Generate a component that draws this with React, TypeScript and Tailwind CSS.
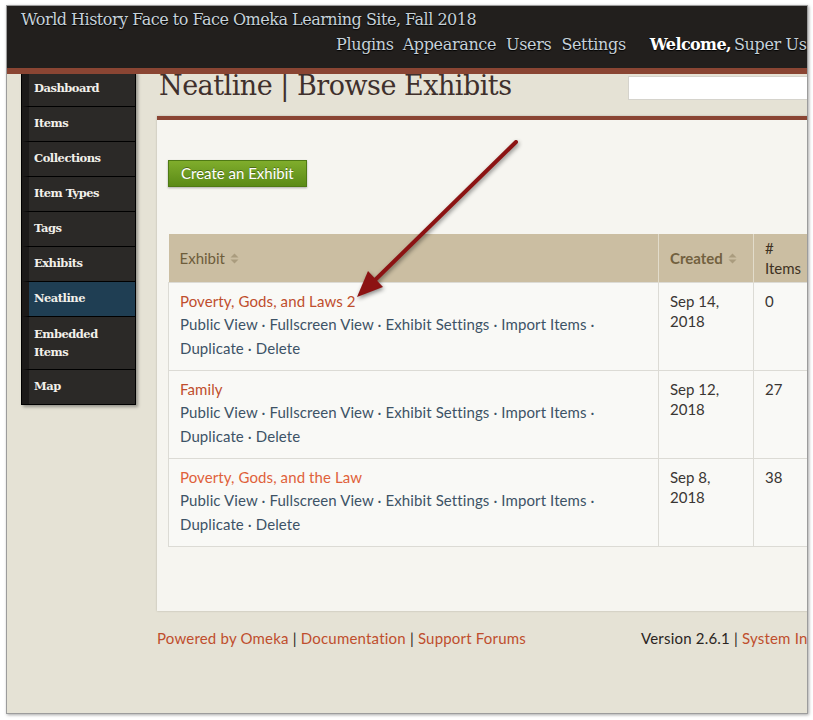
import React from "react";

const serif = { fontFamily: '"DejaVu Serif", "Liberation Serif", serif' };
const sans = { fontFamily: 'Lato, "Open Sans", sans-serif' };

function SortIcon() {
  return (
    <svg width="9" height="11" viewBox="0 0 9 11" className="inline-block ml-[5px] -mt-[2px]">
      <path d="M4.5 0.5 L8.5 4.5 L0.5 4.5 Z" fill="#aa9c7e" />
      <path d="M4.5 10.5 L8.5 6.5 L0.5 6.5 Z" fill="#aa9c7e" />
    </svg>
  );
}

const navItems = ["Dashboard", "Items", "Collections", "Item Types", "Tags", "Exhibits", "Neatline"];

const rows = [
  { title: "Poverty, Gods, and Laws 2", color: "text-[#bf4e2d]", date: ["Sep 14,", "2018"], items: "0" },
  { title: "Family", color: "text-[#bf4e2d]", date: ["Sep 12,", "2018"], items: "27" },
  { title: "Poverty, Gods, and the Law", color: "text-[#e0613a]", date: ["Sep 8,", "2018"], items: "38" },
];

function Dot() {
  return <span className="text-[#3d5366]"> · </span>;
}

export default function App() {
  return (
    <div className="relative w-[813px] h-[720px] bg-white overflow-hidden">
      <div className="pl-[6px] pt-[5px]">
        <div className="w-[802px] h-[709px] border border-[#9c9c9c] shadow-[1px_1px_3px_rgba(0,0,0,0.35)] overflow-hidden bg-[#e5e2d5]">
          <div className="w-[900px]">
            {/* Header */}
            <div className="relative z-10">
              <div className="h-[62px] bg-[#221f1d] pl-[14px] pt-[4px]" style={serif}>
                <div className="text-[16px] leading-[20px] text-[#c6d1d9] tracking-[-0.5px] [text-shadow:0_1px_1px_#000]">
                  World History Face to Face Omeka Learning Site, Fall 2018
                </div>
                <div className="flex items-center mt-[5px] pl-[315px] text-[16px] leading-[20px] text-[#c6d1d9] tracking-[-0.35px] [text-shadow:0_1px_1px_#000]">
                  <span>Plugins</span>
                  <span className="ml-[9px]">Appearance</span>
                  <span className="ml-[10px]">Users</span>
                  <span className="ml-[10px]">Settings</span>
                  <span className="ml-[24px] font-bold text-white tracking-[-0.6px]">Welcome,</span>
                  <span className="ml-[3px]">Super User</span>
                </div>
              </div>
              <div className="h-[6px] bg-[#8a4533]" />
            </div>

            {/* Body */}
            <div className="flex pl-[14px]">
              {/* Sidebar */}
              <div className="w-[115px] shrink-0 -mt-[3px] self-start border border-black bg-[#2b2927] shadow-[2px_2px_3px_rgba(0,0,0,0.35)]" style={serif}>
                {navItems.map((n) => (
                  <div
                    key={n}
                    className={`h-[35px] flex items-center border-b border-black border-l-[7px] border-l-[#1c1a19] pl-[5px] text-[11.5px] font-bold text-[#f2f0ea] tracking-[-0.5px] ${n === "Neatline" ? "bg-[#1f3e53]" : ""}`}
                  >
                    {n}
                  </div>
                ))}
                <div className="h-[53px] flex flex-col justify-center border-b border-black border-l-[7px] border-l-[#1c1a19] pl-[5px] text-[11.5px] leading-[18px] font-bold text-[#f2f0ea] tracking-[-0.5px]">
                  <span>Embedded</span>
                  <span>Items</span>
                </div>
                <div className="h-[34px] flex items-center border-l-[7px] border-l-[#1c1a19] pl-[5px] text-[11.5px] font-bold text-[#f2f0ea] tracking-[-0.5px]">
                  Map
                </div>
              </div>

              {/* Main */}
              <div className="ml-[21px] w-[700px] shrink-0">
                <div className="h-[42px] flex items-start">
                  <div className="w-[471px] shrink-0 pl-[2px] text-[27px] leading-[24px] text-[#3f302c] tracking-[-0.5px]" style={serif}>
                    Neatline | Browse Exhibits
                  </div>
                  <div className="mt-[2px] w-[220px] shrink-0 h-[24px] bg-white border border-[#d5d3cc]" />
                </div>

                <div className="border-t-[4px] border-[#8a4533] bg-[#f6f5f0] shadow-[0_0_2px_rgba(0,0,0,0.2)] pl-[11px] pt-[40px] pb-[64px]" style={sans}>
                  <div className="inline-flex items-center h-[27px] px-[12px] bg-gradient-to-b from-[#80ad2c] to-[#5b8b16] border border-[#4f7a14] text-white text-[15px] shadow-[0_1px_2px_rgba(0,0,0,0.3)] [text-shadow:0_-1px_0_rgba(0,0,0,0.35)]">
                    Create an Exhibit
                  </div>

                  <table className="mt-[47px] w-[650px] border-collapse text-[15px]">
                    <thead>
                      <tr className="bg-[#cbbea2] h-[48px]">
                        <th className="w-[490px] text-left font-normal pl-[11px] text-[#6e5d3b] border-r border-[#e2dccb]">
                          Exhibit
                          <SortIcon />
                        </th>
                        <th className="w-[95px] text-left font-bold pl-[11px] text-[#72613f] border-r border-[#e2dccb]">
                          Created
                          <SortIcon />
                        </th>
                        <th className="text-left font-normal pl-[11px] text-[#3e3222] leading-[20px] align-middle">
                          #<br />Items
                        </th>
                      </tr>
                    </thead>
                    <tbody>
                      {rows.map((r) => (
                        <tr key={r.title} className="bg-[#f9f9f6] border border-[#dcdbd5]">
                          <td className="align-top pl-[11px] pt-[7px] pb-[10px] border-r border-[#dcdbd5]">
                            <div className={`leading-[22px] tracking-[0.1px] ${r.color}`}>{r.title}</div>
                            <div className="leading-[24px] text-[#3d5366] tracking-[0.1px]">
                              Public View<Dot />Fullscreen View<Dot />Exhibit Settings<Dot />Import Items ·
                            </div>
                            <div className="leading-[24px] text-[#3d5366] tracking-[0.1px]">
                              Duplicate<Dot />Delete
                            </div>
                          </td>
                          <td className="align-top pl-[11px] pt-[7px] border-r border-[#dcdbd5] text-[#3a3633] leading-[20px]">
                            <div className="mt-[1px]">{r.date[0]}</div>
                            <div>{r.date[1]}</div>
                          </td>
                          <td className="align-top pl-[11px] pt-[8px] text-[#3a3633] leading-[20px]">{r.items}</td>
                        </tr>
                      ))}
                    </tbody>
                  </table>
                </div>

                <div className="flex mt-[17px] text-[15px] leading-[20px] tracking-[0.2px]" style={sans}>
                  <div className="w-[484px] text-[#bf4e2d]">
                    Powered by Omeka <span className="text-[#2a2522]">|</span> Documentation{" "}
                    <span className="text-[#2a2522]">|</span> Support Forums
                  </div>
                  <div className="text-[#2a2522]">
                    Version 2.6.1 | <span className="text-[#bf4e2d]">System Info</span>
                  </div>
                </div>
              </div>
            </div>
          </div>
        </div>
      </div>

      {/* Annotation arrow */}
      <svg className="absolute left-0 top-0 pointer-events-none" width="813" height="720" style={{ filter: "drop-shadow(1px 2px 2px rgba(0,0,0,0.45))" }}>
        <line x1="516" y1="142" x2="372" y2="283" stroke="#8c1313" strokeWidth="4" strokeLinecap="round" />
        <path d="M357 297 L383 287 L368 271 Z" fill="#8c1313" />
      </svg>
    </div>
  );
}
